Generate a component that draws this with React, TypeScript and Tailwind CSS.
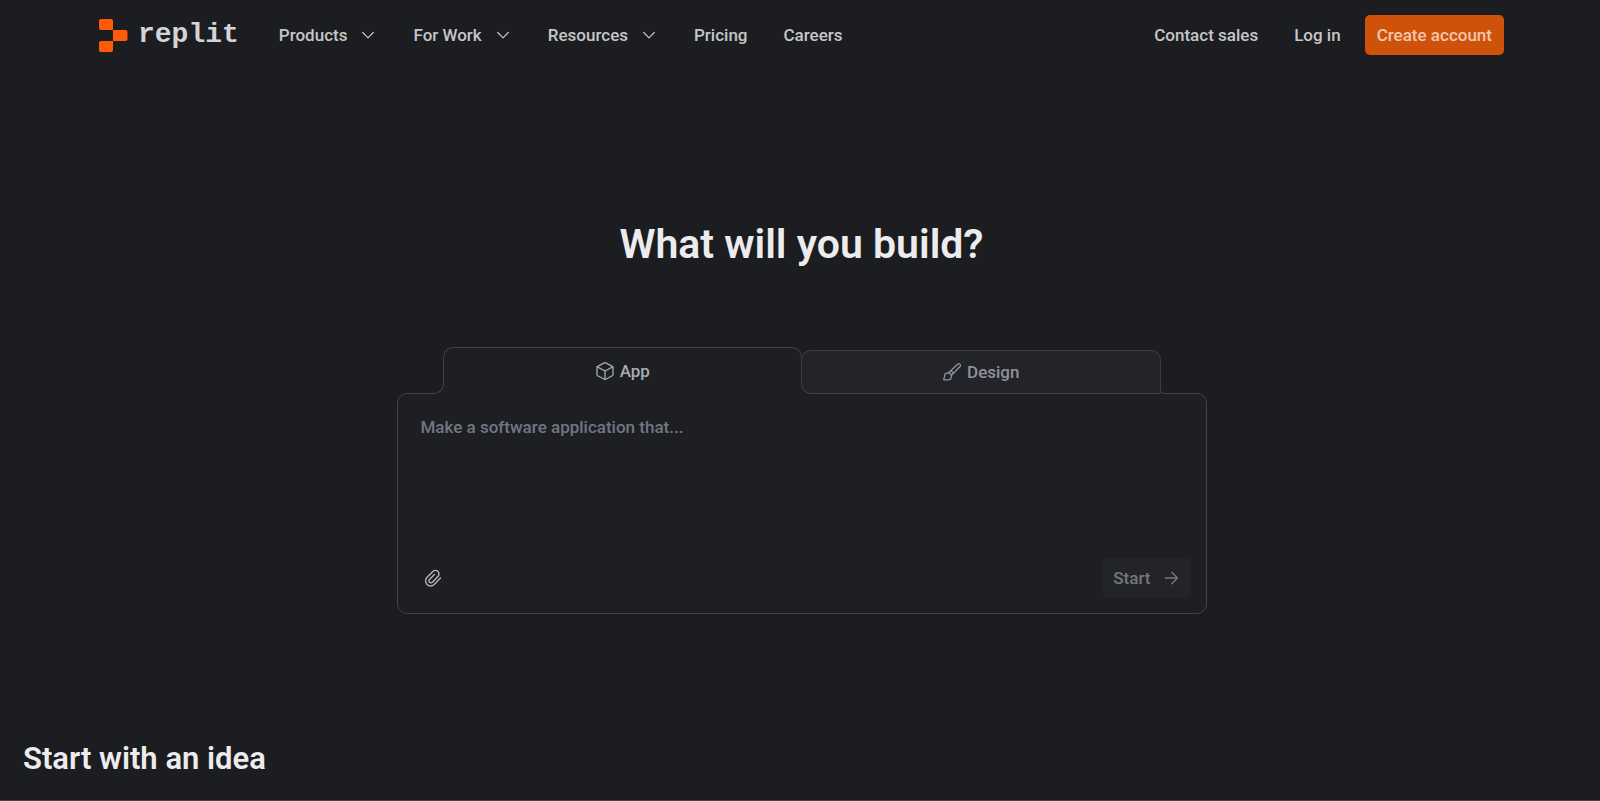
import React from "react";

const stroke = {
  fill: "none",
  stroke: "currentColor",
  strokeLinecap: "round",
  strokeLinejoin: "round",
  "aria-hidden": true,
} as const;

function Chevron() {
  return (
    <svg width="18" height="18" viewBox="0 0 18 18" strokeWidth="1.2" {...stroke}>
      <path d="m3.700 6.500 5.300 5.300 5.300-5.300" />
    </svg>
  );
}

function BoxIcon() {
  return (
    <svg width="20" height="20" viewBox="0 0 20 20" strokeWidth="1.3" {...stroke}>
      <path d="M9.300 1.900a1.500 1.500 0 0 1 1.400 0l6.600 3.500a1.400 1.400 0 0 1 .7 1.200v6.900a1.400 1.400 0 0 1-.7 1.200l-6.600 3.500a1.500 1.500 0 0 1-1.400 0l-6.600-3.500a1.400 1.400 0 0 1-.7-1.200V6.600a1.400 1.400 0 0 1 .7-1.200Z" />
      <path d="M2.300 5.900 10 10l7.700-4.100M10 10v8.300" />
    </svg>
  );
}

function BrushIcon() {
  return (
    <svg width="20" height="20" viewBox="0 0 20 20" strokeWidth="1.3" {...stroke}>
      <path d="M6.600 10.800 15.600 2.200a1.600 1.600 0 0 1 2.400 2.300L9.400 13.500" />
      <path d="M8.700 8.800c1.300.3 2.300 1.300 2.700 2.600" />
      <path d="M5.900 10.900a3.600 3.600 0 0 1 3.500 3.600c0 2-1.500 3.300-3.500 3.300H2.200c-.6 0-.8-.6-.4-1 .6-.6.7-1.300.7-2.300 0-2.200 1.400-3.600 3.400-3.600Z" />
    </svg>
  );
}

function ClipIcon() {
  return (
    <svg width="20" height="20" viewBox="0 0 24 24" strokeWidth="1.700" {...stroke}>
      <path d="m21 12-7.600 7.800a6 6 0 0 1-8.500-.1 6 6 0 0 1 0-8.500l6.900-7.100a4.300 4.300 0 0 1 6.100 0 4.300 4.300 0 0 1 0 6.100l-6.700 6.900a2.400 2.400 0 0 1-3.400 0 2.400 2.400 0 0 1 0-3.400l5.900-6" />
    </svg>
  );
}

function ArrowIcon() {
  return (
    <svg width="18" height="18" viewBox="0 0 18 18" strokeWidth="1.300" {...stroke}>
      <path d="M2.300 9h12.200M8.800 3.200 14.500 9l-5.700 5.800" />
    </svg>
  );
}

function Logo() {
  return (
    <a href="#" className="flex items-center gap-[10px] text-[#d3d4d8]" aria-label="replit home">
      <svg width="29" height="33" viewBox="0 0 29 33" fill="#ff5a0a" aria-hidden="true">
        <path d="M2 0h10A2 2 0 0 1 14 2V11H2A2 2 0 0 1 0 9V2A2 2 0 0 1 2 0Z" />
        <path d="M14 11h12.500a2 2 0 0 1 2 2v7a2 2 0 0 1-2 2H14Z" />
        <path d="M2 22H14v9a2 2 0 0 1-2 2H2A2 2 0 0 1 0 31v-7A2 2 0 0 1 2 22Z" />
      </svg>
      <span className="font-['Liberation_Mono',monospace] text-[28px] leading-8 font-bold">replit</span>
    </a>
  );
}

const menus = ["Products", "For Work", "Resources"];

export default function App() {
  return (
    <div className="flex min-h-screen flex-col border-b border-[#4a454f] bg-[#1c1d20] font-[Roboto,sans-serif] text-[17px] leading-6 font-medium text-[#c5c6c9]">
      <header className="flex items-center justify-between pt-[15px] pr-24 pl-[99px]">
        <nav className="flex items-center" aria-label="Main">
          <Logo />
          <div className="ml-10 flex items-center gap-9">
            {menus.map((m) => (
              <button key={m} type="button" className="flex items-center gap-3">
                {m}
                <Chevron />
              </button>
            ))}
            <a href="#">Pricing</a>
            <a href="#">Careers</a>
          </div>
        </nav>
        <div className="flex items-center">
          <a href="#" className="mr-9">Contact sales</a>
          <a href="#" className="mr-6">Log in</a>
          <a href="#" className="rounded-[5px] bg-[#cf520a] px-3 py-2 text-[#f3c8ae]">Create account</a>
        </div>
      </header>

      <main className="flex flex-1 flex-col pl-[3px]">
        <h1 className="mt-[164px] text-center text-[41px] leading-[50px] font-semibold text-[#ececee]">What will you build?</h1>

        <form className="mx-auto mt-[78px] w-full max-w-[810px]" onSubmit={(e) => e.preventDefault()}>
          <div className="mx-[46px] flex items-end" role="tablist">
            <button type="button" role="tab" aria-selected="true" className="relative z-10 -mb-px flex h-[47px] flex-1 items-center justify-center gap-[5px] rounded-t-[10px] border border-b-0 border-[#41424c] bg-[#1e1f23] text-[#a9abb3]">
              <span className="absolute bottom-0 -left-[10px] size-[10px] bg-[#1e1f23]">
                <span className="block size-full rounded-br-[10px] border-r border-b border-[#41424c] bg-[#1c1d20]" />
              </span>
              <span className="absolute -right-[10px] bottom-0 size-[10px] bg-[#1e1f23]" />
              <BoxIcon />
              App
            </button>
            <button type="button" role="tab" aria-selected="false" className="relative z-20 -mb-px -ml-px flex h-[44px] flex-1 items-center justify-center gap-[5px] rounded-[10px] rounded-br-none border border-[#3b3c46] border-b-[#41424c] bg-[#232429] text-[#8f919b]">
              <span className="absolute -right-1 -bottom-px size-1 bg-[#232429]">
                <span className="block size-full rounded-bl-[4px] border-b border-l border-[#41424c] bg-[#1c1d20]" />
              </span>
              <BrushIcon />
              Design
            </button>
          </div>
          <div className="flex h-[221px] flex-col rounded-[10px] border border-[#41424c] bg-[#1e1f23] p-[15px]">
            <textarea aria-label="Prompt" placeholder="Make a software application that..." className="flex-1 resize-none bg-transparent px-2 py-[6px] outline-none placeholder:text-[#717683]" />
            <div className="flex items-center justify-between">
              <button type="button" aria-label="Attach file" className="p-[10px] text-[#b4b5ba]">
                <ClipIcon />
              </button>
              <button type="submit" className="flex items-center gap-3 rounded-[5px] bg-[#232428] px-[10px] py-2 text-[#76777c]">
                Start
                <ArrowIcon />
              </button>
            </div>
          </div>
        </form>

        <h2 className="mt-auto mb-[23px] pl-5 text-[31px] leading-9 font-semibold text-[#ececee]">Start with an idea</h2>
      </main>
    </div>
  );
}
